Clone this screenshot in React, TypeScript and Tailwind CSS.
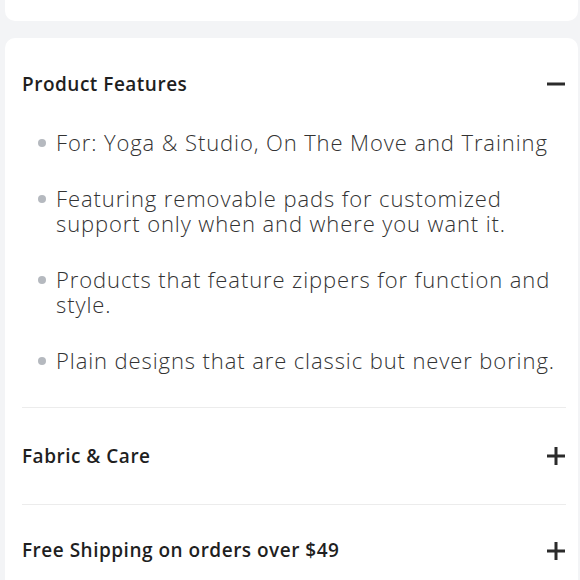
import React from "react";

const items = [
  "For: Yoga & Studio, On The Move and Training",
  "Featuring removable pads for customized support only when and where you want it.",
  "Products that feature zippers for function and style.",
  "Plain designs that are classic but never boring.",
];

function Plus() {
  return (
    <svg width="20" height="20" viewBox="0 0 20 20" className="shrink-0">
      <path d="M10 1v18M1 10h18" stroke="#2b2b2b" strokeWidth="3" />
    </svg>
  );
}

function Minus() {
  return (
    <svg width="20" height="20" viewBox="0 0 20 20" className="shrink-0">
      <path d="M1 10h18" stroke="#2b2b2b" strokeWidth="3" />
    </svg>
  );
}

export default function App() {
  return (
    <div
      className="h-[580px] overflow-hidden bg-[#f3f4f6] pl-[5px] pr-[2px]"
      style={{ fontFamily: "'Open Sans', 'Noto Sans', sans-serif" }}
    >
      <div className="h-[21px] rounded-b-[10px] bg-white" />
      <div className="mt-[17px] rounded-t-[10px] bg-white pb-[60px] pl-[17px] pr-[12px]">
        <div className="flex h-[92px] items-center justify-between">
          <span className="text-[19px] font-semibold tracking-[0.5px] text-[#1f1f1f]">Product Features</span>
          <Minus />
        </div>
        <ul className="flex flex-col gap-[31px] pb-[34px] pl-[16px]">
          {items.map((t) => (
            <li key={t} className="flex items-start gap-[10px] text-[22px] font-light leading-[25px] tracking-[0.9px] text-[#333333]">
              <span className="mt-[9px] h-[8px] w-[8px] shrink-0 rounded-full bg-[#b5b9bf]" />
              <span>{t}</span>
            </li>
          ))}
        </ul>
        <div className="flex h-[97px] items-center justify-between border-t border-[#ececec]">
          <span className="text-[19px] font-semibold tracking-[0.5px] text-[#1f1f1f]">Fabric &amp; Care</span>
          <Plus />
        </div>
        <div className="flex h-[92px] items-center justify-between border-t border-[#ececec]">
          <span className="text-[19px] font-semibold tracking-[0.5px] text-[#1f1f1f]">Free Shipping on orders over $49</span>
          <Plus />
        </div>
      </div>
    </div>
  );
}
